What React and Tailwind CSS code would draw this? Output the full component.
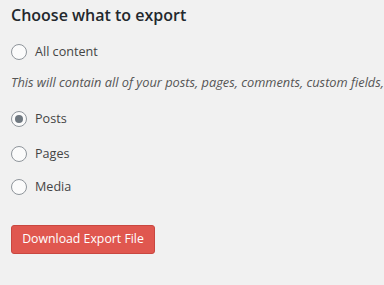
import React from "react";

function Radio({ checked, label }) {
  return (
    <div className="flex items-center h-[24px]">
      <span className="w-[16px] h-[16px] rounded-full border border-[#8f959b] bg-[#fbfbfb] flex items-center justify-center shrink-0">
        {checked && <span className="w-[8px] h-[8px] rounded-full bg-[#6f7880]" />}
      </span>
      <span className="ml-[8px] text-[12.6px] text-[#444]">{label}</span>
    </div>
  );
}

export default function App() {
  return (
    <div
      className="w-[384px] h-[285px] bg-[#f1f1f1] pl-[11px] overflow-hidden"
      style={{ fontFamily: '"Open Sans", "Noto Sans", sans-serif' }}
    >
      <h2 className="h-[30px] leading-[30px] text-[16px] font-semibold text-[#23282d] whitespace-nowrap">
        Choose what to export
      </h2>
      <div className="mt-[10px]">
        <Radio label="All content" />
      </div>
      <p className="mt-[8px] h-[20px] leading-[20px] text-[12.8px] italic text-[#555] whitespace-nowrap">
        This will contain all of your posts, pages, comments, custom fields,
      </p>
      <div className="mt-[15px]">
        <Radio checked label="Posts" />
      </div>
      <div className="mt-[11px]">
        <Radio label="Pages" />
      </div>
      <div className="mt-[9px]">
        <Radio label="Media" />
      </div>
      <button className="mt-[26px] w-[144px] h-[29px] rounded-[3px] bg-[#e0574f] border border-[#c94740] text-white text-[12.3px] leading-none flex items-center justify-center whitespace-nowrap">
        Download Export File
      </button>
    </div>
  );
}
